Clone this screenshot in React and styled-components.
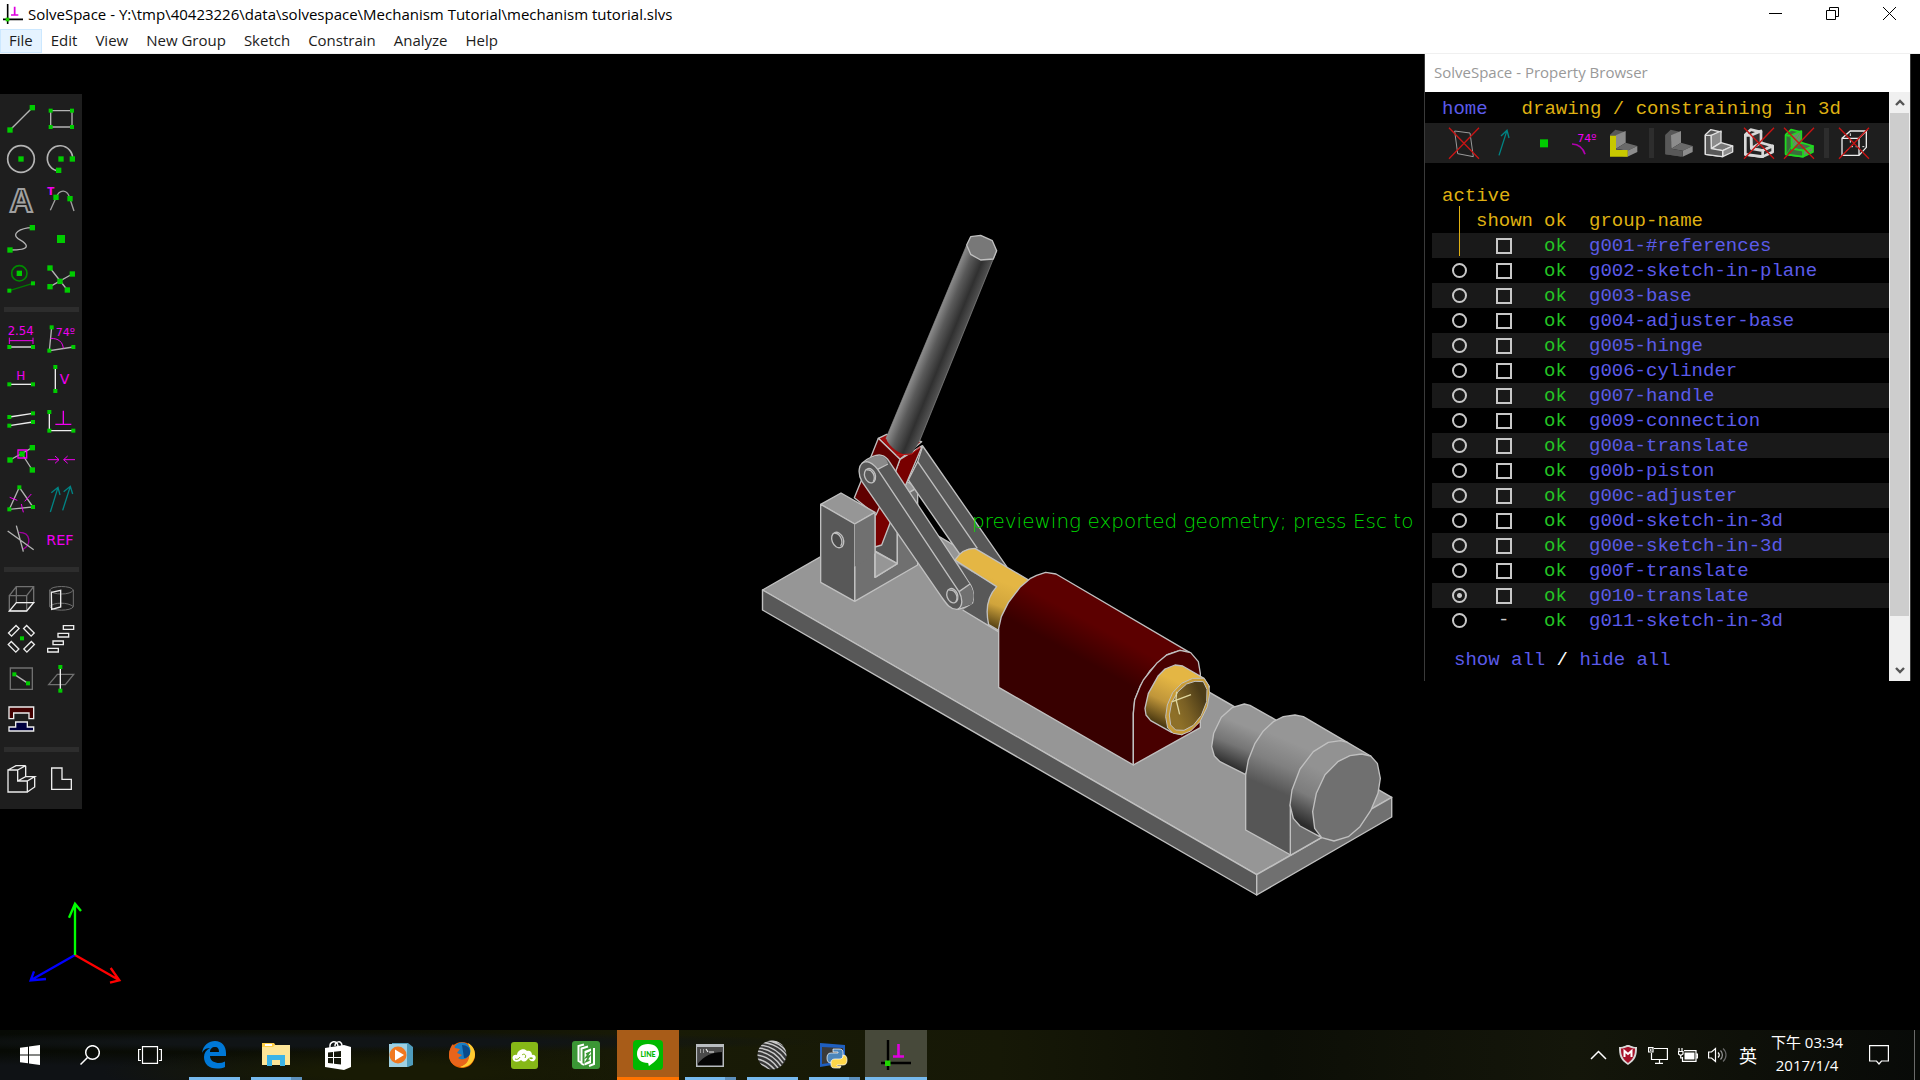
import React, { useState } from "react";
import styled, { createGlobalStyle, css } from "styled-components";

const GREEN = "#00cc00";
const MAGENTA = "#f000f0";
const LINE = "#b4b4b4";
const WHITE = "#ececec";
const EDGE = "#c0c0c0";

const Global = createGlobalStyle`
  * { box-sizing: border-box; }
  body { margin: 0; background: #000; }
  button, input { font: inherit; color: inherit; margin: 0; padding: 0; border: 0; background: none; }
  svg { display: block; }
`;

/* ---------- frame ---------- */

const Frame = styled.div`
  display: flex;
  flex-direction: column;
  height: 100vh;
  overflow: hidden;
  background: #000;
  font-family: "Open Sans", "Noto Sans", sans-serif;
  font-size: 15px;
`;

const TitleBar = styled.header`
  display: flex;
  align-items: center;
  height: 29px;
  flex: none;
  padding: 0 2px 2px 3px;
  gap: 5px;
  background: #fff;
  color: #000;
`;

const TitleText = styled.h1`
  margin: 0;
  flex: 1;
  font-size: 15px;
  line-height: 20px;
  font-weight: 400;
  white-space: pre;
`;

const WindowControls = styled.div`
  display: flex;
`;

const WindowButton = styled.button`
  width: 57px;
  height: 27px;
  display: grid;
  place-items: center;
`;

const MenuBar = styled.nav`
  display: flex;
  flex: none;
  height: 25px;
  background: #fff;
  border-bottom: 1px solid #f0f0f0;
`;

const MenuItem = styled.button`
  height: 24px;
  padding: 0 8px 2px;
  font-size: 15px;
  line-height: 20px;
  color: #1c1c1c;
  border: 1px solid transparent;
  ${(p) => p.$hot && css`background: #e5f3ff; border-color: #cce8ff;`}
`;

const Workspace = styled.main`
  flex: 1;
  min-height: 0;
  display: flex;
  align-items: stretch;
  padding-right: 9px;
`;

const LeftColumn = styled.div`
  width: 128px;
  flex: none;
  display: flex;
  flex-direction: column;
  justify-content: space-between;
  padding: 40px 0 37px;
`;

const ToolPalette = styled.div`
  width: 82px;
  padding: 5px 1px 10px;
  background: #1e1e1e;
`;

const ToolGroup = styled.div`
  display: grid;
  grid-template-columns: 40px 40px;
  & + & {
    padding-top: 20px;
    background: linear-gradient(#2d2d2d, #2d2d2d) 3px 8px / 75px 5px no-repeat;
  }
`;

const ToolButton = styled.button`
  width: 40px;
  height: 40px;
`;

const Viewport = styled.section`
  flex: 1;
  min-width: 0;
  svg { width: 100%; height: 100%; }
`;

/* ---------- property browser ---------- */

const Browser = styled.aside`
  width: 487px;
  flex: none;
  align-self: flex-start;
  border: solid #3a3a3a;
  border-width: 0 1px 0 1px;
  color: #5b5bea;
  font-family: "Liberation Mono", monospace;
  font-size: 19px;
  line-height: 25px;
`;

const BrowserTitle = styled.h2`
  margin: 0;
  height: 38px;
  padding-left: 9px;
  background: #fff;
  color: #999;
  font: 400 15px/36px "Open Sans", "Noto Sans", sans-serif;
`;

const BrowserBody = styled.div`
  display: flex;
`;

const BrowserContent = styled.div`
  flex: 1;
  min-width: 0;
  padding-bottom: 8px;
`;

const Crumbs = styled.div`
  display: flex;
  gap: 34px;
  height: 31px;
  padding: 5px 0 0 17px;
  white-space: pre;
`;

const Link = styled.a`
  color: #5b5bea;
  text-decoration: none;
`;

const Heading = styled.span`
  color: #dfb012;
`;

const IconBar = styled.div`
  display: flex;
  height: 40px;
  padding-left: 19px;
  background: #1e1e1e;
`;

const IconDivider = styled.span`
  width: 5px;
  height: 30px;
  margin: 5px;
  background: #2d2d2d;
`;

const GroupTable = styled.table`
  width: calc(100% - 7px);
  margin: 20px 0 15px 7px;
  border-collapse: collapse;
  table-layout: fixed;
  th, td { padding: 2px 0 0; height: 25px; text-align: left; font-weight: 400; line-height: 23px; }
  th { color: #dfb012; }
`;

const Col = styled.col`
  width: ${(p) => p.$w};
`;

const ActiveHead = styled.th`
  && { padding-left: 10px; }
`;

const Pointer = styled.span`
  display: block;
  position: relative;
  &::after {
    content: "";
    position: absolute;
    left: 27px;
    top: -16px;
    width: 1px;
    height: 50px;
    background: #dfb012;
  }
`;

const GroupRow = styled.tr`
  background: ${(p) => (p.$odd ? "#191919" : "transparent")};
`;

const OkCell = styled.td`
  color: #24c424;
`;

const MarkCell = styled.td`
  && { padding: 0; }
  input, span { display: block; margin-left: 20px; }
`;

const Radio = styled.input`
  appearance: none;
  width: 15px;
  height: 15px;
  border: 2px solid #c8c8c8;
  border-radius: 50%;
  &:checked { background: radial-gradient(circle, #c8c8c8 0 2px, transparent 3px); }
`;

const Check = styled.input`
  appearance: none;
  width: 16px;
  height: 16px;
  border: 2px solid #c8c8c8;
  &:checked { background: #c8c8c8; background-clip: content-box; padding: 2px; }
`;

const Dash = styled.span`
  padding-left: 2px;
  color: #c8c8c8;
`;

const ShowHide = styled.div`
  padding-left: 29px;
  color: #fff;
`;

const ScrollBar = styled.div`
  width: 21px;
  flex: none;
  display: flex;
  flex-direction: column;
  background: #f0f0f0;
`;

const ScrollButton = styled.button`
  height: 21px;
  display: grid;
  place-items: center;
`;

const ScrollTrack = styled.div`
  flex: 1;
  padding: 0 1px;
`;

const ScrollThumb = styled.div`
  height: 92%;
  background: #cdcdcd;
`;

/* ---------- taskbar ---------- */

const TaskBar = styled.footer`
  display: flex;
  flex: none;
  height: 50px;
  color: #fff;
  background:
    radial-gradient(ellipse 300px 26px at 400px 42px, #181a04 30%, transparent),
    radial-gradient(ellipse 420px 22px at 30px 44px, #0f1215 40%, transparent),
    radial-gradient(ellipse 500px 10px at 330px 12px, #101416 40%, transparent),
    linear-gradient(90deg, #070a05, #0d0f05 20%, #191b06 34%, #161806 52%, #0c0e06 66%, #14160a 82%, #080a08);
`;

const SystemButton = styled.button`
  width: 60px;
  display: grid;
  place-items: center;
  &:nth-child(3) { margin-right: 3px; }
`;

const underline = {
  single: "linear-gradient(#76b9ed, #76b9ed)",
  stacked: "linear-gradient(90deg, #76b9ed 40px, #5c8fbb 40px)",
};

const TaskButton = styled.button`
  width: 62px;
  display: grid;
  place-items: center;
  ${(p) => p.$run && css`background: ${underline[p.$run]} 50% 100% / 51px 3px no-repeat;`}
  ${(p) => p.$alert && css`background: linear-gradient(#a85c18 47px, #ff7300 47px);`}
  ${(p) => p.$current && css`background: linear-gradient(#47493a 47px, #76b9ed 47px);`}
`;

const Tray = styled.div`
  display: flex;
  align-items: stretch;
  margin-left: auto;
`;

const TrayButton = styled.button`
  width: 30px;
  display: grid;
  place-items: center;
  font: 18px "Noto Sans CJK TC", sans-serif;
`;

const Clock = styled.button`
  width: 88px;
  margin-right: 4px;
  padding-bottom: 2px;
  font: 15px/23px "Open Sans", "Noto Sans CJK TC", sans-serif;
  text-align: center;
`;

const ActionButton = styled(TrayButton)`
  width: 48px;
`;

const Desktop = styled.button`
  width: 6px;
  margin-left: 11px;
  border-left: 1px solid #6a6a6a;
`;

/* ---------- drawing helpers ---------- */

const Dot = ({ x, y, r = 8 }) => (
  <rect x={x - r} y={y - r} width={2 * r} height={2 * r} fill={GREEN} stroke="none" />
);
const Ln = ({ d, c = LINE, w = 4, f = "none" }) => <path d={d} stroke={c} strokeWidth={w} fill={f} />;
const Tx = ({ x, y, s, children, w = 400 }) => (
  <text x={x} y={y} fontSize={s} fontWeight={w} fill={MAGENTA} fontFamily='"DejaVu Sans", sans-serif'>{children}</text>
);

const SKETCH = [
  ["Line segment", [3, 27], <><Ln d="M30 120L97 53" /><Dot x={30} y={120} /><Dot x={97} y={53} /></>],
  ["Rectangle", [123, 27], <><Ln d="M152 62H216V111H152Z" /><Dot x={152} y={62} r={6} /><Dot x={216} y={62} r={6} /><Dot x={152} y={111} r={6} /><Dot x={216} y={111} r={6} /></>],
  ["Circle", [3, 147], <><circle cx="63" cy="207" r="40" fill="none" stroke={LINE} strokeWidth="5" /><Dot x={63} y={207} /></>],
  ["Arc", [123, 147], <><Ln w={5} d="M218 207A38 38 0 1 0 176 243" /><Dot x={183} y={207} /><Dot x={217} y={207} /><Dot x={176} y={241} /></>],
  ["Text", [3, 267], <text x="64" y="365" textAnchor="middle" fontSize="98" fontWeight="700" fontFamily='"Liberation Sans", sans-serif' fill="none" stroke="#a0a0a0" strokeWidth="6">A</text>],
  ["Tangent arc", [123, 267], <><Ln d="M151 361L168 323C178 296 203 296 210 327L222 363" c="#a0a0a0" /><Dot x={168} y={322} /><Dot x={210} y={326} /><Tx x={142} y={316} s={31} w={700}>T</Tx></>],
  ["Bezier", [3, 387], <><Ln d="M97 413C58 414 34 432 54 446C86 464 96 480 30 480" /><Dot x={97} y={413} /><Dot x={30} y={480} /></>],
  ["Point", [123, 387], <Dot x={183} y={447} r={12} />],
  ["Construction", [3, 507], <><circle cx="58" cy="550" r="23" fill="none" stroke="#008a00" strokeWidth="5" /><Ln d="M28 602L99 580" c="#007a00" /><Dot x={58} y={550} /><Dot x={28} y={602} r={6} /><Dot x={99} y={580} r={6} /></>],
  ["Split curves", [123, 507], <><Ln d="M150 534L202 600M150 590L217 552" /><Dot x={150} y={534} /><Dot x={202} y={600} /><Dot x={150} y={590} /><Dot x={217} y={552} /><Dot x={180} y={574} /></>],
];

const CONSTRAIN = [
  ["Distance", [3, 687], <><Tx x={23} y={735} s={35}>2.54</Tx><Ln c={MAGENTA} w={3} d="M28 752H99M28 743V762M99 743V762" /><Ln c={WHITE} d="M28 771H99" /><Dot x={28} y={771} r={6} /><Dot x={99} y={771} r={6} /></>],
  ["Angle", [123, 687], <><Ln d="M155 712L148 782L220 771" /><Ln c={MAGENTA} w={3} d="M152 745C176 745 188 756 190 775" /><Tx x={167} y={738} s={33}>74º</Tx><Dot x={155} y={712} r={6} /><Dot x={148} y={782} r={6} /><Dot x={220} y={771} r={6} /></>],
  ["Horizontal", [3, 807], <><Tx x={49} y={871} s={36}>H</Tx><Ln c={WHITE} d="M28 883H99" /><Dot x={28} y={883} r={6} /><Dot x={99} y={883} r={6} /></>],
  ["Vertical", [123, 807], <><Tx x={179} y={881} s={42}>V</Tx><Ln c={WHITE} d="M166 831V903" /><Dot x={166} y={831} r={6} /><Dot x={166} y={903} r={6} /></>],
  ["Parallel", [3, 927], <><Ln d="M28 981L99 970M28 1007L99 996" c={WHITE} /><Dot x={28} y={981} r={6} /><Dot x={99} y={970} r={6} /><Dot x={28} y={1007} r={6} /><Dot x={99} y={996} r={6} /></>],
  ["Perpendicular", [123, 927], <><Ln d="M148 966V1022H220" c={WHITE} /><Ln c={MAGENTA} w={4} d="M190 962V1003M166 1003H214" /><Dot x={148} y={966} r={6} /><Dot x={148} y={1022} r={6} /><Dot x={220} y={1022} r={6} /></>],
  ["Point on line", [3, -3], <><Ln d="M30 60L97 23M66 42L97 90" /><Dot x={66} y={42} /><Ln c={MAGENTA} d="M54 30H80V54H54Z" /><Dot x={30} y={60} /><Dot x={97} y={23} /><Dot x={97} y={90} /></>],
  ["Symmetric", [123, -3], <Ln c={MAGENTA} w={3} d="M143 59H177M165 48L177 59L165 70M225 59H191M203 48L191 59L203 70" />],
  ["Equal", [3, 117], <><Ln d="M58 142L28 208L99 201Z" /><Ln c={MAGENTA} w={3} d="M29 172L52 181M74 184L94 162M64 192L70 217" /><Dot x={58} y={142} r={6} /><Dot x={28} y={208} r={6} /><Dot x={99} y={201} r={6} /></>],
  ["Same orientation", [123, 117], <Ln c="#008484" d="M151 216L174 142M154 158L174 142L180 165M188 211L211 139M191 155L211 139L218 162" />],
  ["Other supplement", [3, 237], <><Ln c="#a000a0" d="M58 277C92 277 96 314 68 328" /><Ln d="M23 273L101 329M49 257L70 335" /></>],
  ["Reference", [123, 237], <Tx x={139} y={315} s={43}>REF</Tx>],
];

const GROUPS_NEW = [
  ["Extrude", [3, 417], <><Ln c="#707070" d="M28 467H80V513H28ZM49 440H101V488H49ZM28 467L49 440M80 467L101 440" /><Ln c={WHITE} d="M28 513H80L101 488H49Z" /></>],
  ["Lathe", [123, 417], <><Ln c="#707070" w={3} d="M149 450V500C155 514 214 514 220 500V450C214 436 155 436 149 450C155 466 214 466 220 450M149 500C160 486 205 486 220 500" /><Ln c={WHITE} d="M154 457L182 451V501L155 508Z" /></>],
  ["Step rotating", [3, 537], <>{[[41, 572, -45], [87, 572, 45], [41, 620, 45], [87, 620, -45]].map(([x, y, a]) => <rect key={x + "-" + y} x={x - 16} y={y - 6} width="32" height="13" fill="none" stroke={WHITE} strokeWidth="4" transform={`rotate(${a} ${x} ${y})`} />)}<Dot x={66} y={595} r={6} /></>],
  ["Step translating", [123, 537], <Ln c={WHITE} d="M190 557H221V568H190ZM174 580H206V591H174ZM159 603H190V614H159ZM143 625H175V636H143Z" />],
  ["Sketch in plane", [3, 657], <><Ln c="#707070" d="M31 684H97V748H31Z" /><Ln d="M43 703L84 730" /><Dot x={43} y={703} r={6} /><Dot x={84} y={730} r={6} /></>],
  ["Sketch in 3d", [123, 657], <><Ln c="#707070" d="M146 734L172 703H221L196 734Z" /><Ln c={WHITE} d="M181 681V752" /><Dot x={181} y={681} r={6} /><Dot x={181} y={752} r={6} /></>],
  ["Assemble", [3, 777], <><Ln c={WHITE} f="#440000" d="M27 801H101V836H87V819H41V836H27Z" /><Ln c={WHITE} f="#000040" d="M47 846H82V861H101V873H27V861H47Z" /></>],
];

const VIEWS = [
  ["Nearest isometric", [3, 957], <Ln c={WHITE} d="M24 990H53V1023H82V1056H24ZM24 990L48 977H77L53 990M77 977V1010L53 1023M77 1010H104L82 1023M104 1010V1041L82 1056" />],
  ["Nearest orthographic", [123, 957], <Ln c={WHITE} d="M155 984H186V1018H214V1048H155Z" />],
];

const Cross = ({ x }) => <Ln c="#c81414" w={4} d={`M${x - 45} 233L${x + 45} 326M${x + 45} 233L${x - 45} 326`} />;
const Solid = ({ x, tone = ["#8c8c8c", "#6a6a6a", "#585858"], edge = "none", w = 3 }) => (
  <g stroke={edge} strokeWidth={w} strokeLinejoin="round">
    <path fill={tone[2]} d={`M${x} 254L${x + 16} 239L${x + 47} 246L${x + 30} 252L${x + 17} 300L${x + 50} 320L${x} 313Z`} />
    <path fill={tone[0]} d={`M${x + 17} 256L${x + 47} 243V278L${x + 18} 296Z`} />
    <path fill={tone[1]} d={`M${x + 18} 296L${x + 47} 278L${x + 82} 288L${x + 52} 302Z`} />
    <path fill={tone[0]} d={`M${x + 52} 302L${x + 82} 288V306L${x + 52} 320Z`} />
    <path fill={tone[2]} d={`M${x} 256H${x + 17}L${x + 18} 296L${x + 52} 302V320L${x} 313Z`} />
  </g>
);

const PANEL_ICONS = [
  ["Show workplanes", 72, <><Ln c="#9a9a9a" w={3} d="M104 243L150 249L160 320L113 311Z" /><Cross x={132} /></>],
  ["Show normals", 192, <Ln c="#008484" d="M237 316L261 241M243 258L261 241L267 264" />],
  ["Show points", 312, <Dot x={372} y={280} r={12} />],
  ["Show constraints", 432, <><Ln c="#b000b0" w={5} d="M456 282C478 283 490 296 495 313" /><Tx x={472} y={277} s={33}>74º</Tx></>],
  ["Show faces", 552, <><Solid x={570} /><path fill="#c8c800" d="M570 257H588V300H623V320H570Z" /></>],
  null,
  ["Show shaded", 717, <Solid x={736} />],
  ["Show edges", 837, <Solid x={856} edge="#e0e0e0" tone={["#8c8c8c", "#787878", "#585858"]} w={4} />],
  ["Show outlines", 956, <><Solid x={975} edge="#d8d8d8" tone={["#333", "#333", "#222"]} w={8} /><Cross x={1016} /></>],
  ["Show mesh", 1076, <><Solid x={1096} edge="#20d820" tone={["#6a8a6a", "#4a6a4a", "#3c6c3c"]} w={5} /><Ln c="#20d820" w={2} d="M1098 256L1142 278M1098 313L1142 246M1114 296L1178 306M1148 320L1178 290" /><Cross x={1136} /></>],
  null,
  ["Show hidden lines", 1241, <><Ln c={WHITE} d="M1265 265H1316V316H1265ZM1265 265L1290 243H1338L1316 265M1338 243V292L1316 316" /><Ln c={WHITE} w={3} d="M1290 250V258M1290 270V278M1290 290H1298M1306 290H1314M1326 290H1332M1284 297L1278 303" /><Cross x={1301} /></>],
];

const ROWS = ["g001-#references", "g002-sketch-in-plane", "g003-base", "g004-adjuster-base", "g005-hinge", "g006-cylinder", "g007-handle", "g009-connection", "g00a-translate", "g00b-piston", "g00c-adjuster", "g00d-sketch-in-3d", "g00e-sketch-in-3d", "g00f-translate", "g010-translate", "g011-sketch-in-3d"];

const Tools = ({ items }) => (
  <ToolGroup>
    {items.map(([name, [x, y], art]) => (
      <ToolButton key={name} aria-label={name}>
        <svg width="40" height="40" viewBox={`${x} ${y} 120 120`}>{art}</svg>
      </ToolButton>
    ))}
  </ToolGroup>
);

/* ---------- 3d model ---------- */

const Base = () => (
  <g fill="none" stroke={EDGE} strokeWidth="1.4" strokeLinejoin="round">
    <path fill="#969696" d="M762.5 590L897.5 512.6L1391.7 797.3L1256.7 874.7Z" />
    <path fill="#585858" d="M762.5 590V610L1256.7 895V874.7Z" />
    <path fill="#707070" d="M1256.7 874.7V895L1391.7 817V797.3Z" />
  </g>
);

const Linkage = () => (
  <g transform="translate(740 220) scale(.33333)" stroke={EDGE} strokeWidth="4" strokeLinejoin="round" fill="none">
    <path fill="#585858" d="M370 779L472 838V1031L370 973Z" />
    <path fill="#969696" d="M370 779L472 838L533 803L431 745Z" />
    <path fill="#707070" d="M344 912L405 877V1072L472 1031V838L533 803V1035L344 1144Z" />
    <path fill="#969696" d="M405 995L472 1031L405 1072Z" />
    <path fill="#585858" d="M548 678L533 725L505 780L640 975L700 1060L800 1040Z" />
    <path d="M533 725L712 985" />
    <path fill="#a00c0c" d="M415 655L440 643L545 665L480 718Z" />
    <path fill="#780000" d="M480 718L547 677L497 795L450 910L425 975L405 981L405 885L465 757Z" />
    <path fill="#600000" d="M415 655L480 718L466 757L408 885L343 833L395 705Z" />
    <path fill="url(#rod)" stroke="none" d="M680 75L438 655C450 690 500 715 516 700L538 665L770 92Z" />
    <path strokeWidth="2" stroke="#8c8c8c" d="M680 75L438 655M538 665L770 92" />
    <path strokeWidth="3" stroke="#c01818" d="M470 705L516 702L540 680" />
    <path fill="#787878" d="M692 50L722 46L757 62L770 92L760 117L722 120L692 103L680 75Z" />
    <path fill="#969696" d="M242 853L303 819L405 877L344 912Z" />
    <path fill="#585858" d="M242 853L344 912V1144L242 1087Z" />
    <path fill="#707070" stroke="none" d="M344 912L405 877V1000L344 1040Z" />
    <path d="M344 912L405 877V1072" />
    <ellipse cx="293" cy="960" rx="17" ry="24" fill="#4a4a4a" transform="rotate(-22 293 960)" />
    <path d="M283 940C300 938 312 965 302 978" />
    <path fill="#585858" d="M366 730C385 712 410 702 425 706C435 708 442 715 448 725L685 1083C703 1105 708 1135 695 1155L655 1168L600 1100Z" />
    <path fill="#8a8a8a" stroke="none" d="M368 731C385 714 410 704 424 708C434 710 440 717 444 730L413 748L395 731Z" />
    <path fill="#707070" stroke="none" d="M657 1115L686 1092C702 1110 704 1138 693 1152L665 1162Z" />
    <path fill="#585858" d="M366 785C352 760 354 727 380 725C395 727 405 738 413 748L657 1115C668 1135 670 1160 652 1168C632 1170 618 1150 606 1133Z" />
    <path d="M413 748L444 732M657 1115L690 1092" />
    <g fill="#5a5a5a">
      <ellipse cx="390" cy="767" rx="16" ry="22" transform="rotate(-20 390 767)" />
      <ellipse cx="637" cy="1127" rx="16" ry="22" transform="rotate(-20 637 1127)" />
    </g>
    <path d="M380 750C397 746 408 770 400 784M628 1111C645 1106 656 1130 648 1144" />
    <path fill="#585858" stroke="none" d="M655 1032L772 1100L775 1232L668 1170L700 1150C706 1120 700 1100 686 1083Z" />
    <path d="M668 1170L775 1235" />
    <path fill="url(#pin)" d="M645 1020C660 995 680 985 705 985L866 1080L800 1180L777 1232L746 1214C735 1165 742 1130 770 1100Z" />
  </g>
);

const Cylinder = () => (
  <g transform="translate(1000 500) scale(.33333)" stroke={EDGE} strokeWidth="4" strokeLinejoin="round" fill="none">
    <path fill="url(#barrel)" d="M-4 562V385L4 350L25 308L60 262L90 236L110 226L137 217L168 222L570 458L540 451L500 465L450 512L420 560L404 600L400 640V795Z" />
    <path fill="#480000" d="M400 795V640L404 600L420 560L430 540L470 490L500 465L540 451L572 458L595 485L601 520V683Z" />
    <path fill="url(#brass)" d="M435 625L445 580L475 527L495 507L525 495L548 498L612 535L628 560L600 660L545 704L515 697L452 662L438 645Z" />
    <path fill="#c89c38" strokeWidth="3" d="M612 535L626 556L629 580L622 620L600 665L572 693L545 704L520 700L503 684L497 650L502 615L518 578L545 550L578 535Z" />
    <path fill="url(#bore)" strokeWidth="3" d="M610 545L621 568L620 605L604 646L580 676L552 691L527 690L512 675L508 645L515 608L534 575L560 552L585 544Z" />
    <path stroke="#e0d8a0" d="M515 606L573 584M530 575L528 598L539 643" />
    <path fill="url(#grey)" d="M736 823L660 785L643 768L635 740L641 700L664 652L698 622L733 612L750 616L828 660Z" />
    <path fill="url(#greyBig)" d="M737 990V825L745 780L765 730L790 693L820 665L850 650L885 645L910 650L1042 727L990 740L905 810L872 915V1065Z" />
    <path fill="#707070" d="M871 1066V915L960 1010L965 1012Z" />
    <path fill="url(#greyDisc)" d="M958 1009L900 978L880 955L870 915L876 870L900 807L940 755L985 727L1022 722L1042 727L1112 768Z" />
    <path fill="#707070" d="M1112 768L1132 790L1141 835L1134 880L1112 932L1080 980L1045 1010L1002 1023L965 1013L944 985L938 935L949 880L975 824L1015 784L1050 767L1085 762Z" />
  </g>
);

const grad = (id, [x1, y1, x2, y2], stops) => (
  <linearGradient id={id} gradientUnits="userSpaceOnUse" x1={x1} y1={y1} x2={x2} y2={y2}>
    {stops.map(([o, c]) => <stop key={o} offset={o} stopColor={c} />)}
  </linearGradient>
);

const Model = () => (
  <svg viewBox="128 54 1296 976" role="img" aria-label="Toggle clamp mechanism">
    <defs>
      {grad("rod", [558, 368, 643, 403], [[0, "#8c8c8c"], [0.3, "#5a5a5a"], [0.68, "#303030"], [1, "#525252"]])}
      {grad("pin", [800, 1090, 750, 1225], [[0, "#e4b644"], [0.5, "#d0a43c"], [1, "#4a3810"]])}
      {grad("barrel", [230, 345, 178, 440], [[0, "#5c0000"], [1, "#380000"]])}
      {grad("brass", [520, 540, 460, 665], [[0, "#e4b644"], [0.5, "#c0963a"], [1, "#4a3810"]])}
      {grad("bore", [525, 640, 612, 600], [[0, "#8e7028"], [0.4, "#7a6024"], [1, "#4c3c18"]])}
      {grad("grey", [740, 680, 690, 800], [[0, "#969696"], [0.5, "#757575"], [1, "#2c2c2c"]])}
      {grad("greyBig", [860, 720, 800, 860], [[0, "#969696"], [0.5, "#808080"], [1, "#565656"]])}
      {grad("greyDisc", [980, 820, 905, 970], [[0, "#929292"], [0.5, "#7c7c7c"], [1, "#2c2c2c"]])}
    </defs>
    <Base />
    <Linkage />
    <Cylinder />
    <text x="972" y="528" fill="#00dc00" fontSize="20" fontWeight="200" fontFamily='"DejaVu Sans", sans-serif'>previewing exported geometry; press Esc to</text>
  </svg>
);

const Axes = () => (
  <svg width="128" height="96" viewBox="0 0 384 288" fill="none" strokeWidth="7">
    <path stroke="#0000ff" d="M225 174L92 250M102 223L92 250L138 246" />
    <path stroke="#ff0000" d="M225 174L358 250M332 213L358 250L330 257" />
    <path stroke="#00ff00" d="M225 174V20M207 62L225 20L243 42" />
  </svg>
);

/* ---------- logos ---------- */

const SolveLogo = ({ size }) => (
  <svg width={size} height={size} viewBox="0 0 30 30" fill="none">
    <path stroke="#000" strokeWidth="2.4" d="M7 0V30M0 23H30" />
    <path stroke="#e000e0" strokeWidth="2.6" d="M17.500 4V16M12 16.500H23" />
    <rect x="4" y="20.500" width="5.500" height="5.500" fill="#1fd400" />
  </svg>
);

const Apps = [
  ["Edge", { $run: "single" }, <svg width="26" height="28" viewBox="0 0 26 28"><path fill="#0078d7" d="M1 12C2 4 8 0 14 0c7 0 11 5 11 12v3H9c0 5 5 7 9 7 2 0 4-.5 6-1.500V26c-2 1-5 1.500-8 1.500C8 27.500 3 23 3 16c0-4 2-7 6-9-5 0-7 3-8 5zM9 11h9c0-3-1-5-4-5s-5 2-5 5z" /></svg>],
  ["File Explorer", { $run: "stacked" }, <svg width="28" height="24" viewBox="0 0 28 24"><path fill="#ffcf48" d="M0 0h12l2 3v4H0z" /><path fill="#fde597" d="M0 4h11l2-2h15v20H0z" /><path fill="#fff" d="M3 1h7v2H3z" /><path fill="#3cb4e7" d="M5 23V12h18v11h-5v-6h-8v6z" /></svg>],
  ["Store", {}, <svg width="28" height="30" viewBox="0 0 28 30"><path stroke="#fff" strokeWidth="1.500" fill="none" d="M6 8C5 1 13-1 14 6M11 6c0-5 7-6 7 0" /><path fill="#fff" d="M1 8L20 5L27 7V27L20 30L1 27Z" /><path fill="#15170a" d="M4 12.500L9 12v5H4zM10 11.800L17 11v6h-7zM4 18h5v5.500L4 23zM10 18h7v6.500l-7-.8z" /></svg>],
  ["Media Player", {}, <svg width="25" height="25" viewBox="0 0 25 25"><path fill="#4f9cbc" d="M4 0h16l5 4v18l-5 2H4z" /><path fill="#9fd0e2" d="M1 1h18v23H1z" /><circle cx="10" cy="12" r="8.500" fill="#f07820" /><path fill="#fff" d="M7 6.500L16 12L7 17.500Z" /></svg>],
  ["Firefox", {}, <svg width="28" height="28" viewBox="0 0 28 28"><circle cx="14" cy="14" r="13" fill="#e66000" /><path fill="#ffcb30" d="M20 2c7 4 9 12 5 18-3 5-9 7-13 6 8-3 12-12 8-24z" /><circle cx="14" cy="10" r="8.500" fill="#1b7fc4" /><path fill="#0a4a8a" d="M14 4c5 0 8 3 8 7s-3 6-6 6z" /><path fill="#e8641b" d="M1 14C1 9 3 5 5 3l2 4 5 1-3 4 5 2-4 3c3 3 8 2 11-2 0 7-6 11-11 10C4 24 1 20 1 14z" /></svg>],
  ["Cloud", {}, <svg width="27" height="27" viewBox="0 0 27 27"><rect width="27" height="27" rx="3" fill="#86b817" /><path fill="#fff" d="M3 19c-3-3-1-7 3-6 0-5 7-8 10-4 3-1 5 1 5 4 4-1 5 4 2 6-3 1-5-1-5-3 2 2 4 1 4 0-2-2-5 0-6 2-2 2-4 2-6 0-2 2-5 2-7 1z" /><path d="M4 17c2 1 4 0 5-2M11 13c2-2 5 0 3 3" stroke="#86b817" strokeWidth="1" fill="none" /></svg>],
  ["Books", {}, <svg width="28" height="28" viewBox="0 0 28 28"><rect width="28" height="28" rx="3" fill="#3b9635" /><path fill="none" stroke="#fff" strokeWidth="2" d="M12 3.500L6.500 5V20L9 21.500M16 5.500L9.500 7.500V22.500L12 24M17 25L22 23V7" /><path fill="#fff" d="M12.500 10L19 7.500V22L12.500 24.500Z" /><path stroke="#3b9635" strokeWidth="1.500" fill="none" d="M14 13l3.500-1.500L14 16.500l3.500-1.500L14 20.500l3.500-1.500" /></svg>],
  ["LINE", { $alert: true }, <svg width="30" height="30" viewBox="0 0 30 30"><rect width="30" height="30" rx="4" fill="#00b900" /><path fill="#fff" d="M15 4c7 0 11 4 11 10 0 5-6 9-10 12-1-1 0-2-1-3C8 23 4 19 4 14 4 8 8 4 15 4z" /><text x="15" y="17" textAnchor="middle" fontFamily="Lato, sans-serif" fontWeight="900" fontSize="7" fill="#00b900">LINE</text></svg>],
  ["Command Prompt", { $run: "stacked" }, <svg width="28" height="23" viewBox="0 0 28 23"><rect width="28" height="23" fill="#b8bcc0" /><rect x="1.500" y="3" width="25" height="18.500" fill="#050505" /><path fill="#4a4a4a" d="M1.500 3h25v5C16 8 8 12 1.500 20z" /><path stroke="#eee" strokeWidth="1.200" d="M4 6h1M4 8h1M7 6h1M7 8h1M10 5l2 3M13 8h5" /></svg>],
  ["Sphere", { $run: "single" }, <svg width="30" height="30" viewBox="0 0 30 30"><defs><clipPath id="ball"><circle cx="15" cy="15" r="14.500" /></clipPath></defs><g clipPath="url(#ball)"><rect width="30" height="30" fill="#383838" /><path fill="none" stroke="#c8c8c8" strokeWidth="1.500" d="M2 2c8 0 20 3 28 14M0 5c10 0 20 4 28 15M0 8c10 0 19 5 26 15M0 11c9 1 17 5 24 15M0 15c8 1 15 5 21 13M0 19c6 1 12 4 18 11M0 23c5 1 9 3 13 7M8 0c8 1 16 4 22 12M13 0c6 1 12 3 17 8" /></g></svg>],
  ["Python", { $run: "stacked" }, <svg width="28" height="27" viewBox="0 0 28 27"><path fill="#1f5fc0" d="M0 1L25 3V21L0 25Z" /><path fill="#3a3a3a" d="M2 5L23 6V19L2 22Z" /><path fill="#4d86ba" stroke="#fff" strokeWidth=".7" d="M13 7h6c3 0 4 1 4 4v4c0 2-2 3-4 3h-4c-3 0-4 1-4 3-3 0-4-2-4-5s1-5 4-5h7v-1h-5z" /><path fill="#ffd84a" stroke="#fff" strokeWidth=".7" d="M20 26h-5c-3 0-4-1-4-3v-3c0-2 2-3 4-3h4c3 0 4-1 4-4 3 0 4 2 4 5s-1 5-4 5h-6v1h4z" /></svg>],
  ["SolveSpace", { $current: true }, <SolveLogo size={30} />],
];

const stroke = { fill: "none", stroke: "#fff", strokeWidth: 1.5 };

export default function App() {
  const [active, setActive] = useState("g010-translate");
  return (
    <Frame>
      <Global />
      <TitleBar>
        <SolveLogo size={20} />
        <TitleText>{"SolveSpace - Y:\\tmp\\40423226\\data\\solvespace\\Mechanism Tutorial\\mechanism tutorial.slvs"}</TitleText>
        <WindowControls>
          <WindowButton aria-label="Minimize"><svg width="13" height="13" stroke="#000" fill="none"><path d="M0 6.500H13" /></svg></WindowButton>
          <WindowButton aria-label="Restore"><svg width="13" height="13" stroke="#000" fill="none"><path d="M.5 3.500H9.500V12.500H.5ZM3.500 3V.5H12.500V9.500H10" /></svg></WindowButton>
          <WindowButton aria-label="Close"><svg width="13" height="13" stroke="#000" fill="none"><path d="M0 0L13 13M13 0L0 13" /></svg></WindowButton>
        </WindowControls>
      </TitleBar>
      <MenuBar>
        {["File", "Edit", "View", "New Group", "Sketch", "Constrain", "Analyze", "Help"].map((m) => (
          <MenuItem key={m} $hot={m === "File"}>{m}</MenuItem>
        ))}
      </MenuBar>

      <Workspace>
        <LeftColumn>
          <ToolPalette>
            <Tools items={SKETCH} />
            <Tools items={CONSTRAIN} />
            <Tools items={GROUPS_NEW} />
            <Tools items={VIEWS} />
          </ToolPalette>
          <Axes />
        </LeftColumn>
        <Viewport><Model /></Viewport>
        <Browser>
          <BrowserTitle>SolveSpace - Property Browser</BrowserTitle>
          <BrowserBody>
            <BrowserContent>
              <Crumbs><Link href="#home">home</Link><Heading>drawing / constraining in 3d</Heading></Crumbs>
              <IconBar>
                {PANEL_ICONS.map((it, i) => it ? (
                  <ToolButton key={it[0]} aria-label={it[0]}>
                    <svg width="40" height="40" viewBox={`${it[1]} 219 120 120`}>{it[2]}</svg>
                  </ToolButton>
                ) : <IconDivider key={i} />)}
              </IconBar>
              <GroupTable>
                <colgroup><Col $w="44px" /><Col $w="68px" /><Col $w="45px" /><Col $w="auto" /></colgroup>
                <thead>
                  <tr><ActiveHead colSpan={4}>active</ActiveHead></tr>
                  <tr><th><Pointer /></th><th>shown</th><th>ok</th><th>group-name</th></tr>
                </thead>
                <tbody>
                  {ROWS.map((name, i) => (
                    <GroupRow key={name} $odd={i % 2 === 0}>
                      <MarkCell>{i > 0 && <Radio type="radio" name="active" aria-label={`Activate ${name}`} checked={active === name} onChange={() => setActive(name)} />}</MarkCell>
                      <MarkCell>{i < 15 ? <Check type="checkbox" aria-label={`Show ${name}`} /> : <Dash>-</Dash>}</MarkCell>
                      <OkCell>ok</OkCell>
                      <td><Link href={`#${name}`}>{name}</Link></td>
                    </GroupRow>
                  ))}
                </tbody>
              </GroupTable>
              <ShowHide><Link href="#show">show all</Link> / <Link href="#hide">hide all</Link></ShowHide>
            </BrowserContent>
            <ScrollBar>
              <ScrollButton aria-label="Scroll up"><svg width="10" height="7" viewBox="0 0 10 7"><path d="M1 6L5 2L9 6" fill="none" stroke="#555" strokeWidth="2.400" /></svg></ScrollButton>
              <ScrollTrack><ScrollThumb /></ScrollTrack>
              <ScrollButton aria-label="Scroll down"><svg width="10" height="7" viewBox="0 0 10 7"><path d="M1 1L5 5L9 1" fill="none" stroke="#555" strokeWidth="2.400" /></svg></ScrollButton>
            </ScrollBar>
          </BrowserBody>
        </Browser>
      </Workspace>

      <TaskBar>
        <SystemButton aria-label="Start"><svg width="20" height="20" viewBox="0 0 20 20" fill="#fff"><path d="M0 2.800L8 1.700V9.500H0ZM9 1.500L20 0V9.500H9ZM0 10.500H8V18.300L0 17.200ZM9 10.500H20V20L9 18.500Z" /></svg></SystemButton>
        <SystemButton aria-label="Search"><svg width="20" height="20" viewBox="0 0 20 20" {...stroke}><circle cx="12.500" cy="7.500" r="6.800" /><path d="M7.500 12.500L.5 19.500" /></svg></SystemButton>
        <SystemButton aria-label="Task View"><svg width="24" height="18" viewBox="0 0 24 18" {...stroke} strokeWidth="1.200"><path d="M4.500.6H19.500V17.400H4.500ZM3 3.500H.6V14.500H3M21 3.500H23.400V14.500H21" /></svg></SystemButton>
        {Apps.map(([name, props, art]) => <TaskButton key={name} aria-label={name} {...props}>{art}</TaskButton>)}
        <Tray>
          <TrayButton aria-label="Show hidden icons"><svg width="17" height="10" viewBox="0 0 17 10" {...stroke}><path d="M1 9L8.500 1.500L16 9" /></svg></TrayButton>
          <TrayButton aria-label="McAfee"><svg width="18" height="20" viewBox="0 0 18 20"><path fill="#d8d8d8" d="M0 2C6 2 6 0 9 0s3 2 9 2c0 8-1 13-9 18C1 15 0 10 0 2z" /><path fill="#a8122a" d="M2 3.500C6 3.500 7 2 9 2s3 1.500 7 1.500c0 6-1 10-7 14.500C3 13.500 2 9.500 2 3.500z" /><path fill="none" stroke="#fff" strokeWidth="2" d="M5.500 12V6L9 9L12.500 6V12" /></svg></TrayButton>
          <TrayButton aria-label="Network"><svg width="20" height="17" viewBox="0 0 20 17" {...stroke} strokeWidth="1.200"><path d="M6 1.500H19.400V12.500H3.500V6M11.500 12.500V16M7 16.400H15M.6.6H5V5H.6ZM2.800 2V4" /></svg></TrayButton>
          <TrayButton aria-label="Battery"><svg width="20" height="14" viewBox="0 0 20 14" {...stroke} strokeWidth="1.200"><path d="M6 2.600H18V13.400H4.500V9M18 6H19.400V10H18M1 0V3M4 0V3M.5 3.500H5V6L2.700 7.500L.5 6ZM2.700 7V10H4.500" /><path fill="#fff" stroke="none" d="M6.500 4.500H16.500V11.500H6.500Z" /></svg></TrayButton>
          <TrayButton aria-label="Volume"><svg width="20" height="16" viewBox="0 0 20 16" {...stroke} strokeWidth="1.200"><path d="M.6 5H3.500L7.500 1.500V14.500L3.500 11H.6ZM10 5.500C11.500 7 11.500 9 10 10.500" /><path stroke="#999" d="M12.500 3.500C15 6 15 10 12.500 12.500" /><path stroke="#666" d="M15 1.500C19 5 19 11 15 14.500" /></svg></TrayButton>
          <TrayButton>英</TrayButton>
          <Clock>下午 03:34<br />2017/1/4</Clock>
          <ActionButton aria-label="Notifications"><svg width="20" height="20" viewBox="0 0 20 20" {...stroke} strokeWidth="1.200"><path d="M.6.6H19.400V16H12.500L10 19L7.500 16H.6Z" /></svg></ActionButton>
          <Desktop aria-label="Show desktop" />
        </Tray>
      </TaskBar>
    </Frame>
  );
}
